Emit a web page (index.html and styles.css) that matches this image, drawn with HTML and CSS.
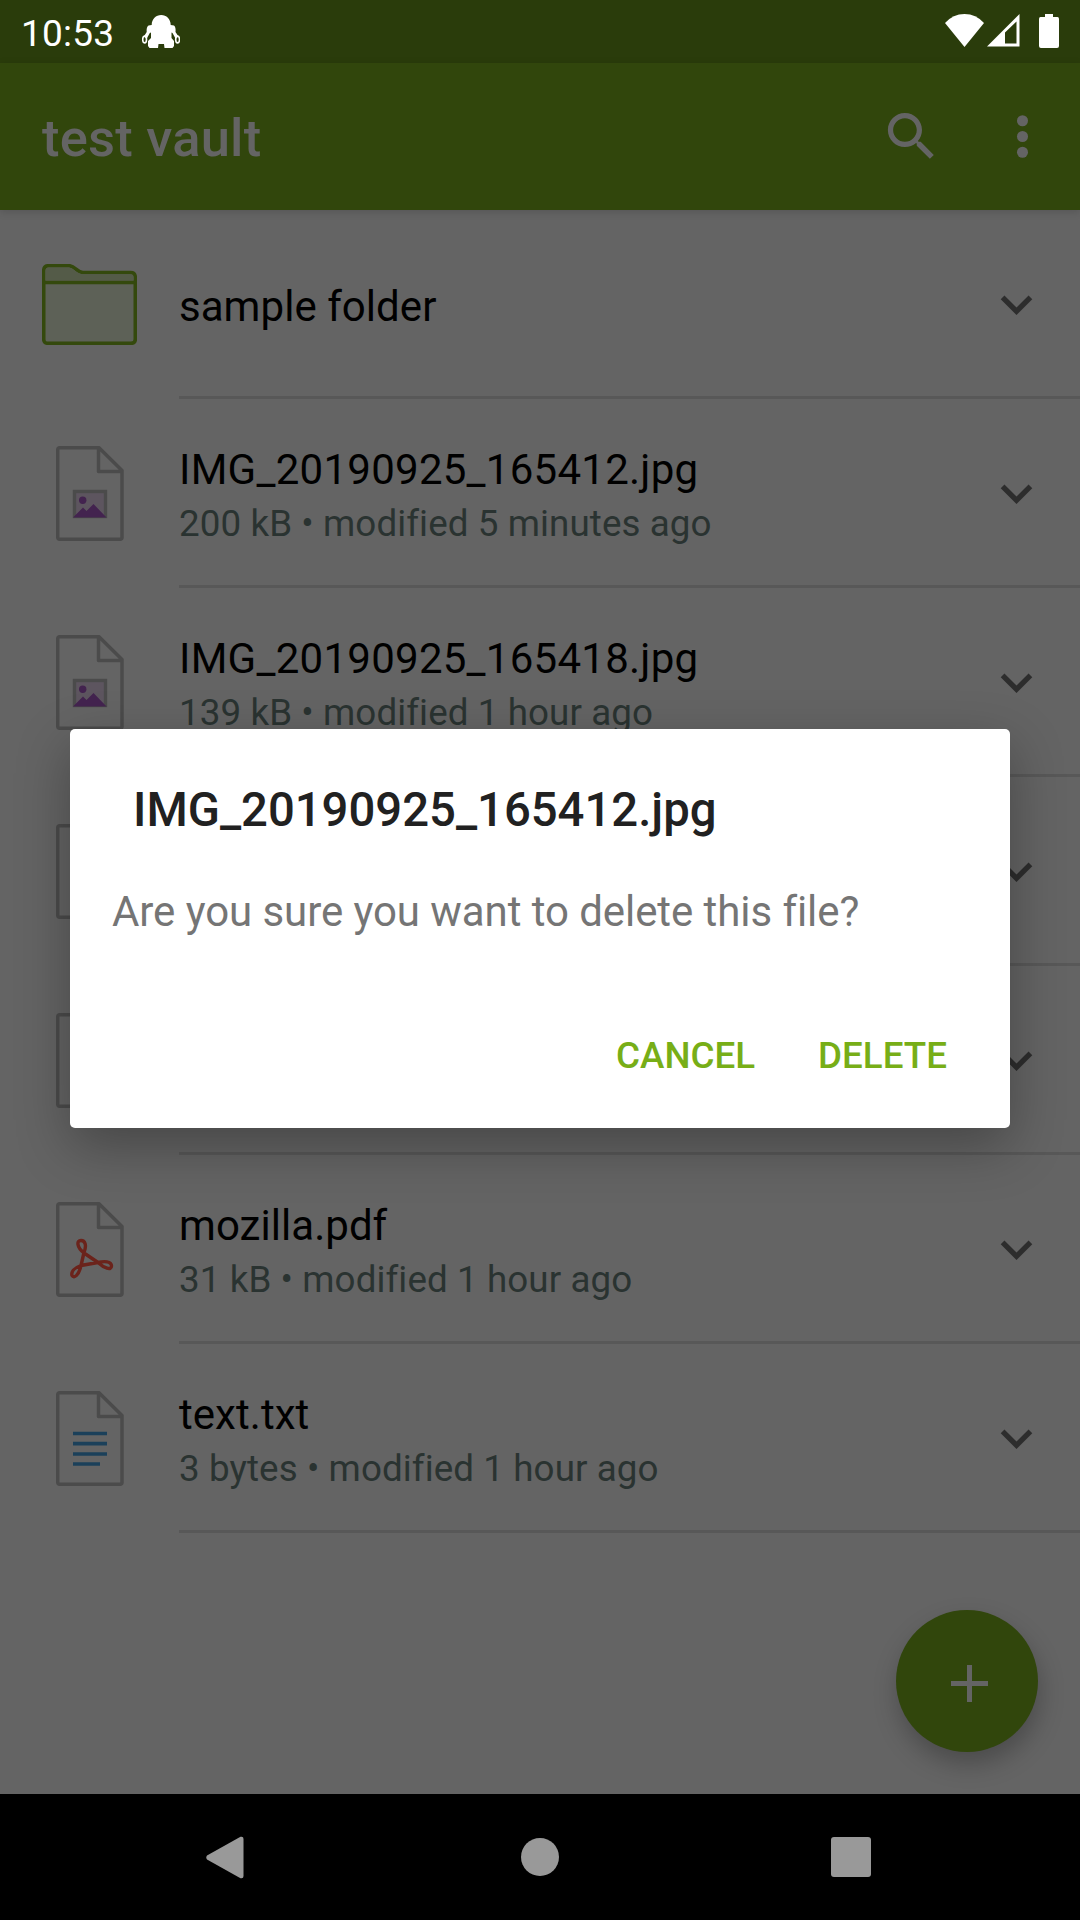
FILE: index.html
```html
<!DOCTYPE html>
<html lang="en">
<head>
<meta charset="utf-8">
<title>test vault</title>
<link rel="stylesheet" href="styles.css">
</head>
<body>
<svg class="defs" aria-hidden="true">
  <symbol id="chevron" viewBox="0 0 24 24"><path fill="#2d2d2d" d="M16.59 8.59L12 13.17 7.41 8.59 6 10l6 6 6-6z"/></symbol>
  <symbol id="page" viewBox="0 0 68 95"><path fill="none" stroke="#4b4b4b" stroke-width="3.500" stroke-linejoin="round" d="M3.700 1.700H43L66 24.500V91.300Q66 93.300 64 93.300H3.700Q1.700 93.300 1.700 91.300V3.700Q1.700 1.700 3.700 1.700ZM42.500 2V25.500H65.500"/></symbol>
  <symbol id="image" viewBox="0 0 68 95"><use href="#page"/><rect x="18.500" y="45.500" width="31" height="25" fill="#5d555f" stroke="#4b4b4b" stroke-width="3.400"/><circle cx="26.700" cy="54.300" r="3.700" fill="#43234f"/><path fill="#43234f" d="M17 71.500L27 61.500 30.500 65 37.500 58 50.500 71.500Z"/></symbol>
</svg>
<div class="screen">
  <header class="status">
    <span class="clock">10:53</span>
    <svg class="robot" width="38" height="34" viewBox="0 0 38 34"><path fill="#fff" d="M9.700 10C9.700 4 14 0 19.200 0S28.700 4 28.700 10L32 10.500Q34 12 33.500 17L36.500 21.500 33.500 23.500 30.500 18 29.500 17.500V23L32 26V31L30.500 33H22.500L22 29H16.500L16 33H7.500L6 31V26L9 23V17.500L7.800 18 4.800 23.500 1.800 21.500 4.700 17Q4.200 12 6.500 10.500Z"/><g fill="none" stroke="#fff" stroke-width="1.600"><ellipse cx="2.600" cy="24.500" rx="1.900" ry="3.400"/><ellipse cx="35.600" cy="24.500" rx="1.900" ry="3.400"/></g></svg>
    <div class="signals">
      <svg width="39" height="33" viewBox="0 0 39 33"><path fill="#fff" d="M0 9Q8 0 19.500 0T39 9L19.500 33Z"/></svg>
      <svg class="cell" width="33" height="33" viewBox="0 0 33 33"><path fill="#fff" fill-rule="evenodd" d="M0 32.500L32.500 0V32.500ZM18 18.500V29.500H29.500V7.500Z"/></svg>
      <svg class="battery" width="20" height="34" viewBox="0 0 20 34"><path fill="#fff" d="M6 0H14V3H18.500Q20 3 20 5V32Q20 34 18 34H2Q0 34 0 32V5Q0 3 1.500 3H6Z"/></svg>
    </div>
  </header>
  <div class="appbar">
    <h1>test vault</h1>
    <svg class="search" viewBox="0 0 24 24"><path fill="#646464" d="M15.500 14h-.79l-.28-.27C15.410 12.590 16 11.110 16 9.500 16 5.910 13.090 3 9.500 3S3 5.910 3 9.500 5.910 16 9.500 16c1.610 0 3.090-.59 4.230-1.570l.27.28v.79l5 4.990L20.490 19l-4.990-5zm-6 0C7.010 14 5 11.990 5 9.500S7.010 5 9.500 5 14 7.010 14 9.500 11.990 14 9.500 14z"/></svg>
    <svg class="more" viewBox="0 0 24 24"><g fill="#646464"><circle cx="12" cy="6" r="2.100"/><circle cx="12" cy="12" r="2.100"/><circle cx="12" cy="18" r="2.100"/></g></svg>
  </div>
  <main class="list">
    <div class="row">
      <div class="thumb"><svg width="95" height="81" viewBox="0 0 95 81"><path fill="#5d6157" stroke="#34490d" stroke-width="3.600" d="M1.700 7Q1.700 1.700 6.500 1.700H27C33 1.700 35 8.500 41 8.500H88.500Q93.300 8.500 93.300 13.500V75Q93.300 79.300 89 79.300H6Q1.700 79.300 1.700 75Z"/><path fill="#545b48" d="M3.400 16.500V7Q3.400 3.400 6.500 3.400H27C32 4 35 10.200 41 10.200H88.500Q91.600 10.200 91.600 13.500V16.500Z"/><path stroke="#34490d" stroke-width="3.600" d="M2 18.500H93"/></svg></div>
      <div class="body"><div class="texts"><div class="name">sample folder</div></div><svg class="chev"><use href="#chevron"/></svg></div>
    </div>
    <div class="row">
      <div class="thumb"><svg width="68" height="95"><use href="#image"/></svg></div>
      <div class="body"><div class="texts"><div class="name photo">IMG_20190925_165412.jpg</div><div class="meta">200 kB • modified 5 minutes ago</div></div><svg class="chev"><use href="#chevron"/></svg></div>
    </div>
    <div class="row">
      <div class="thumb"><svg width="68" height="95"><use href="#image"/></svg></div>
      <div class="body"><div class="texts"><div class="name photo">IMG_20190925_165418.jpg</div><div class="meta">139 kB • modified 1 hour ago</div></div><svg class="chev"><use href="#chevron"/></svg></div>
    </div>
    <div class="row">
      <div class="thumb"><svg width="68" height="95"><use href="#page"/></svg></div>
      <div class="body"><div class="texts"></div><svg class="chev"><use href="#chevron"/></svg></div>
    </div>
    <div class="row">
      <div class="thumb"><svg width="68" height="95"><use href="#page"/></svg></div>
      <div class="body"><div class="texts"></div><svg class="chev"><use href="#chevron"/></svg></div>
    </div>
    <div class="row">
      <div class="thumb"><svg width="68" height="95" viewBox="0 0 68 95"><use href="#page"/><path fill="none" stroke="#6b231b" stroke-width="3.400" stroke-linejoin="round" d="M25 63.500L28 50.500C31 43 29 38.500 25 38.500C20.500 38.500 20.500 45 28 51L42 60.500C48 66 55.500 69 55.500 64C55.500 59 48 59 42 60.500L25 63.500C18 66 15 70 16 73.500C18 77 23 73 25 63.500Z"/></svg></div>
      <div class="body"><div class="texts"><div class="name">mozilla.pdf</div><div class="meta">31 kB • modified 1 hour ago</div></div><svg class="chev"><use href="#chevron"/></svg></div>
    </div>
    <div class="row">
      <div class="thumb"><svg width="68" height="95" viewBox="0 0 68 95"><use href="#page"/><path stroke="#1b405a" stroke-width="3.700" d="M17 42.500H51M17 52.700H51M17 63H51M17 73H44"/></svg></div>
      <div class="body"><div class="texts"><div class="name">text.txt</div><div class="meta">3 bytes • modified 1 hour ago</div></div><svg class="chev"><use href="#chevron"/></svg></div>
    </div>
  </main>
  <nav class="nav">
    <svg width="38" height="43" viewBox="0 0 38 43"><path fill="#999" d="M1 19.500L34.500 .8Q37.500 0 37.500 3V40Q37.500 43 34.500 42.200L1 23.500Q-.5 21.500 1 19.500Z"/></svg>
    <span class="home"></span>
    <span class="recent"></span>
  </nav>
  <div class="fab"><svg width="37" height="37" viewBox="0 0 37 37"><path stroke="#646464" stroke-width="5" d="M0 18.500H37M18.500 0V37"/></svg></div>
  <section class="dialog">
    <h2>IMG_20190925_165412.jpg</h2>
    <p>Are you sure you want to delete this file?</p>
    <div class="actions"><span>CANCEL</span><span>DELETE</span></div>
  </section>
</div>
</body>
</html>
```
FILE: styles.css
```css
* { box-sizing: border-box; margin: 0; padding: 0; }
body { font-family: Roboto, sans-serif; background: #646464; }
svg { display: block; flex: none; }
.defs { position: absolute; width: 0; height: 0; }
.screen { position: relative; width: 1080px; height: 1920px; overflow: hidden; display: flex; flex-direction: column; background: #646464; }
.status { height: 63px; background: #2a3c0b; display: flex; align-items: flex-start; padding: 0 21px; color: #fff; }
.clock { width: 92px; font-size: 37px; line-height: 43px; padding-top: 12px; letter-spacing: .25px; }
.robot { margin: 15px 0 0 29px; }
.signals { display: flex; margin: 14px 0 0 auto; }
.cell { margin-left: 3px; }
.battery { margin-left: 19px; }
.appbar { position: relative; z-index: 1; height: 147px; background: #31460c; display: flex; align-items: center; padding: 0 26px 0 42px; box-shadow: 0 2px 8px rgba(0, 0, 0, .15); }
h1 { flex: 1; font-size: 52.5px; font-weight: 500; line-height: 62px; color: #646464; padding-top: 2px; letter-spacing: .22px; }
.search, .more { width: 63px; height: 63px; }
.more { margin-left: 48px; }
.list { flex: 1; }
.row { height: 189px; display: flex; }
.thumb { width: 179px; display: flex; align-items: center; justify-content: center; }
.body { flex: 1; display: flex; align-items: center; border-bottom: 3px solid #585858; padding: 2px 32px 0 0; }
.texts { flex: 1; padding-top: 4px; }
.name { font-size: 42px; line-height: 49px; color: #000; letter-spacing: .05px; }
.photo { letter-spacing: .26px; }
.meta { font-size: 36.75px; line-height: 43px; color: #2a3331; padding-top: 8px; letter-spacing: .09px; }
.chev { width: 63px; height: 63px; }
.nav { height: 126px; background: #000; display: flex; align-items: center; justify-content: space-between; padding: 0 209px 0 206px; }
.home { width: 38px; height: 38px; margin-left: 4px; border-radius: 50%; background: #999; }
.recent { width: 40px; height: 40px; border-radius: 3px; background: #999; }
.fab { position: absolute; left: 896px; top: 1610px; width: 142px; height: 142px; border-radius: 50%; background: #31460c; display: flex; align-items: center; justify-content: center; padding: 5px 0 0 5px; box-shadow: 2px 12px 24px rgba(0, 0, 0, .25); }
.dialog { position: absolute; left: 70px; top: 729px; width: 940px; height: 399px; border-radius: 5px; background: #fff; box-shadow: 0 18px 54px rgba(0, 0, 0, .3); }
h2 { font-size: 47.25px; line-height: 56px; font-weight: 500; color: #212121; padding: 53px 0 0 63px; }
p { font-size: 42px; line-height: 49px; color: #757575; padding: 49px 0 0 42px; letter-spacing: -.07px; }
.actions { display: flex; justify-content: flex-end; gap: 63px; padding: 98px 63px 0 0; font-size: 36.75px; line-height: 43px; font-weight: 500; color: #77ae17; }
```
